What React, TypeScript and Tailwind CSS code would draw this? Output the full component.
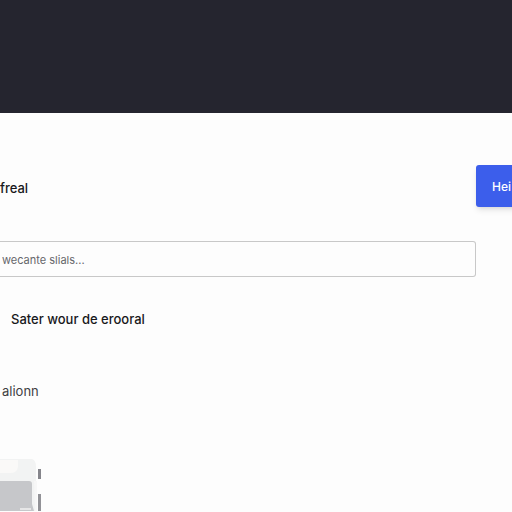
function PreviewThumb() {
  return (
    <svg
      className="block h-[53px] w-12"
      viewBox="0 0 48 53"
      fill="none"
      aria-hidden="true"
    >
      <path d="M0 1H32Q36 2 36 9V53H0Z" fill="#f2f3f3" />
      <path d="M0 2H18V9Q17 15 10 15H0Z" fill="#faf9f8" />
      <path d="M0 23H29Q32 23 32 26V46L34 53H0Z" fill="#c6c7ca" />
      <path d="M20 50H31V52H20Z" fill="#e6e6e7" />
      <path d="M34 23H37V53H35Z" fill="#f7f7f7" />
      <path d="M38 11H41V21H38Z" fill="#85858b" />
      <path d="M38 36H41V53H38Z" fill="#929297" />
    </svg>
  );
}

export default function App() {
  return (
    <div className="flex min-h-screen flex-col overflow-hidden bg-[#fdfdfd] font-[Inter,'Liberation_Sans',sans-serif] text-[#18181b]">
      <header className="h-[113px] bg-[#25252f]" />

      <main className="flex-1 pt-[52px]">
        <div className="flex items-center justify-between pr-9">
          <h1 className="pt-1 text-[13px] font-medium leading-5">freal</h1>
          <button
            type="button"
            className="-mr-20 h-[42px] w-20 shrink-0 rounded-[3px] bg-[#3c5eeb] pl-4 pt-0.5 text-left text-xs font-medium text-white shadow-md"
          >
            Hei
          </button>
        </div>

        <div className="mt-[34px] pr-9">
          <input
            type="text"
            aria-label="wecante"
            placeholder="wecante slials..."
            className="block h-9 w-full rounded-r-[3px] border border-l-0 border-[#c8c8c8] bg-[#fdfdfd] pl-0.5 pt-0.5 text-[11px] text-[#3f3f46] placeholder:text-[#66666b]"
          />
        </div>

        <h2 className="mt-8 pl-[11px] text-[13px] font-medium leading-5">
          Sater wour de erooral
        </h2>
        <p className="mt-[52px] pl-0.5 text-[13px] leading-5 text-[#3f3f43]">
          alionn
        </p>

        <div className="mt-[57px]">
          <PreviewThumb />
        </div>
      </main>
    </div>
  );
}
